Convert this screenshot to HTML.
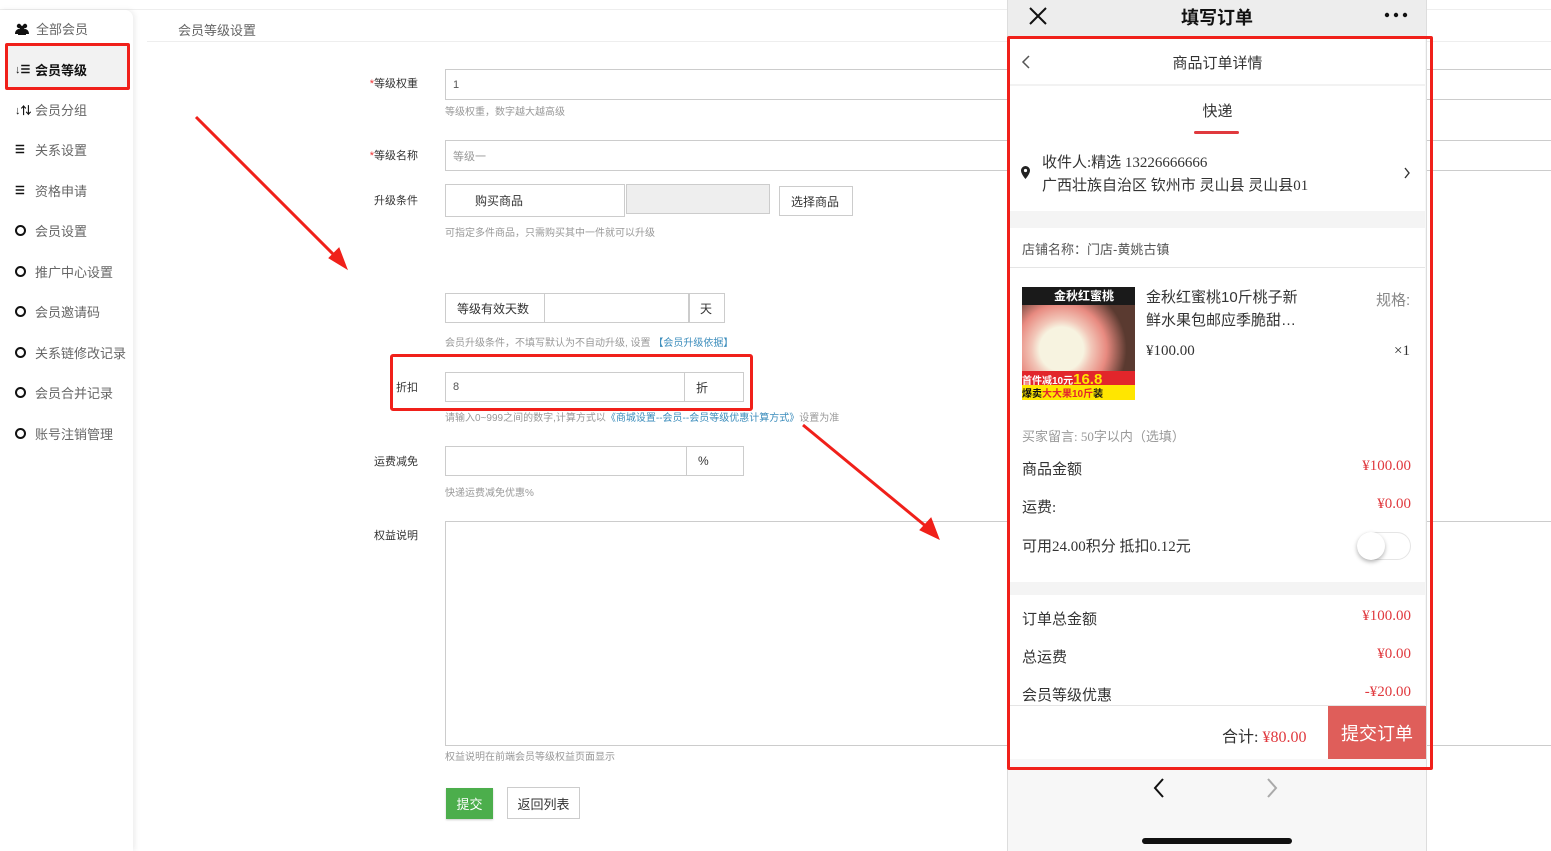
<!DOCTYPE html>
<html><head><meta charset="utf-8"><style>
*{box-sizing:border-box;margin:0;padding:0}
body{width:1551px;height:851px;overflow:hidden;background:#fff;font-family:"Liberation Sans","Noto Sans CJK SC",sans-serif;position:relative;color:#333}
.a{position:absolute}
.side{left:0;top:10px;width:133px;height:841px;background:#fff;box-shadow:2px 0 6px rgba(0,0,0,.08);border-top-right-radius:8px}
.mi{position:absolute;left:15px;font-size:13px;color:#666;display:flex;align-items:center}
.mi i{display:inline-block;width:11px;height:11px;border:2px solid #111;border-radius:50%;margin-right:9px}
.mi b{display:inline-block;width:12px;margin-right:8px;font-weight:bold;color:#111;font-size:11px}
.lbl{position:absolute;font-size:11px;color:#333;text-align:right;width:60px}
.inp{position:absolute;border:1px solid #ccc;background:#fff;font-size:11px;color:#555;padding-left:7px;display:flex;align-items:center}
.hint{position:absolute;font-size:10px;color:#999}
.ph{left:1007px;top:0;width:420px;height:851px;background:#f7f7f7;border-left:1px solid #ddd;border-right:1px solid #ddd}
.r{position:absolute;display:flex;justify-content:space-between;font-size:15px;color:#333;font-family:"Liberation Serif","Noto Sans CJK SC",serif}
.r .p{color:#e0393e}
</style></head><body>
<div class="a" style="left:0;top:9px;width:1551px;height:1px;background:#eee"></div>
<div class="a side"></div>
<div class="mi" style="top:19px"><svg width="14" height="12" style="margin-right:7px"><circle cx="4" cy="3" r="2.2" fill="#111"/><circle cx="10" cy="3" r="2.2" fill="#111"/><circle cx="7" cy="5" r="2.4" fill="#111"/><path d="M0 11c0-4 3-5 4-5s4 1 4 5zM6 11c0-4 3-5 4-5s4 1 4 5z" fill="#111"/><path d="M3 12c0-4 2-5 4-5s4 1 4 5z" fill="#111"/></svg>全部会员</div>
<div class="a" style="left:7px;top:45px;width:121px;height:44px;background:#f2f2f2"></div>
<div class="mi" style="top:60px;color:#111;font-weight:bold"><b>↓☰</b>会员等级</div>
<div class="mi" style="top:100px"><b>↓⇅</b>会员分组</div>
<div class="mi" style="top:140px"><b>☰</b>关系设置</div>
<div class="mi" style="top:181px"><b>☰</b>资格申请</div>
<div class="mi" style="top:221px"><i></i>会员设置</div>
<div class="mi" style="top:262px"><i></i>推广中心设置</div>
<div class="mi" style="top:302px"><i></i>会员邀请码</div>
<div class="mi" style="top:343px"><i></i>关系链修改记录</div>
<div class="mi" style="top:383px"><i></i>会员合并记录</div>
<div class="mi" style="top:424px"><i></i>账号注销管理</div>
<div class="a" style="left:5px;top:43px;width:125px;height:47px;border:3px solid #f0201a;border-radius:2px"></div>

<div class="a" style="left:178px;top:20px;font-size:13px;color:#666">会员等级设置</div>
<div class="a" style="left:147px;top:41px;width:1404px;height:1px;background:#eee"></div>

<div class="lbl" style="left:358px;top:75px"><span style="color:#e33">*</span>等级权重</div>
<div class="inp" style="left:445px;top:69px;width:1120px;height:31px">1</div>
<div class="hint" style="left:445px;top:103px">等级权重，数字越大越高级</div>
<div class="lbl" style="left:358px;top:147px"><span style="color:#e33">*</span>等级名称</div>
<div class="inp" style="left:445px;top:140px;width:1120px;height:31px;color:#999">等级一</div>
<div class="lbl" style="left:358px;top:192px">升级条件</div>
<div class="inp" style="left:445px;top:184px;width:180px;height:33px;font-size:12px;color:#333;padding-left:29px">购买商品</div>
<div class="a" style="left:626px;top:184px;width:144px;height:30px;background:#eee;border:1px solid #ccc"></div>
<div class="inp" style="left:779px;top:186px;width:74px;height:30px;font-size:12px;color:#333;padding-left:11px">选择商品</div>
<div class="hint" style="left:445px;top:224px">可指定多件商品，只需购买其中一件就可以升级</div>
<div class="inp" style="left:445px;top:293px;width:100px;height:30px;font-size:12px;color:#333;padding-left:11px">等级有效天数</div>
<div class="inp" style="left:544px;top:293px;width:145px;height:30px"></div>
<div class="inp" style="left:689px;top:293px;width:36px;height:30px;font-size:12px;color:#333;padding-left:10px">天</div>
<div class="hint" style="left:445px;top:334px">会员升级条件，不填写默认为不自动升级, 设置 <span style="color:#3c8dbc">【会员升级依据】</span></div>
<div class="lbl" style="left:358px;top:379px">折扣</div>
<div class="inp" style="left:445px;top:372px;width:240px;height:30px">8</div>
<div class="inp" style="left:684px;top:372px;width:60px;height:30px;font-size:12px;color:#333;padding-left:11px">折</div>
<div class="a" style="left:390px;top:354px;width:363px;height:57px;border:3px solid #f0201a;border-radius:3px"></div>
<div class="hint" style="left:445px;top:409px">请输入0~999之间的数字,计算方式以<span style="color:#3c8dbc">《商城设置--会员--会员等级优惠计算方式》</span>设置为准</div>
<div class="lbl" style="left:358px;top:453px">运费减免</div>
<div class="inp" style="left:445px;top:446px;width:242px;height:30px"></div>
<div class="inp" style="left:686px;top:446px;width:58px;height:30px;font-size:12px;color:#333;padding-left:11px">%</div>
<div class="hint" style="left:445px;top:484px">快递运费减免优惠%</div>
<div class="lbl" style="left:358px;top:527px">权益说明</div>
<div class="inp" style="left:445px;top:521px;width:1120px;height:225px"></div>
<div class="hint" style="left:445px;top:748px">权益说明在前端会员等级权益页面显示</div>
<div class="a" style="left:446px;top:788px;width:47px;height:31px;background:#4cae4c;color:#fff;font-size:13px;display:flex;align-items:center;justify-content:center;box-shadow:0 1px 2px rgba(0,0,0,.2)">提交</div>
<div class="a" style="left:507px;top:787px;width:73px;height:32px;border:1px solid #ccc;font-size:13px;display:flex;align-items:center;justify-content:center">返回列表</div>

<svg class="a" style="left:0;top:0" width="1551" height="851">
<g stroke="#f0201a" stroke-width="3" fill="#f0201a">
<line x1="196" y1="117" x2="337" y2="258"/><polygon points="347,269 329,258 339,248" stroke-width="1"/>
<line x1="803" y1="425" x2="928" y2="528"/><polygon points="939,539 920,530 931,518" stroke-width="1"/>
</g></svg>

<div class="a ph"></div>
<div class="a" style="left:1008px;top:0;width:418px;height:37px;background:#ededed"></div>
<svg class="a" style="left:1028px;top:6px" width="20" height="20"><path d="M2 2L18 18M18 2L2 18" stroke="#111" stroke-width="2"/></svg>
<div class="a" style="left:1008px;top:4px;width:418px;text-align:center;font-size:18px;font-weight:bold;color:#111">填写订单</div>
<svg class="a" style="left:1384px;top:12px" width="24" height="6"><circle cx="3" cy="3" r="2.2" fill="#111"/><circle cx="12" cy="3" r="2.2" fill="#111"/><circle cx="21" cy="3" r="2.2" fill="#111"/></svg>
<div class="a" style="left:1010px;top:38px;width:415px;height:720px;background:#fff"></div>
<svg class="a" style="left:1020px;top:54px" width="12" height="16"><path d="M9 2L3 8L9 14" stroke="#555" stroke-width="1.5" fill="none"/></svg>
<div class="a" style="left:1010px;top:52px;width:415px;text-align:center;font-size:15px;color:#333">商品订单详情</div>
<div class="a" style="left:1010px;top:84px;width:415px;height:2px;background:#f2f2f2"></div>
<div class="a" style="left:1010px;top:100px;width:415px;text-align:center;font-size:15px;color:#333">快递</div>
<div class="a" style="left:1194px;top:131px;width:45px;height:3px;background:#e0393e;border-radius:2px"></div>
<svg class="a" style="left:1020px;top:165px" width="11" height="15"><path d="M5.5 1a4.5 4.5 0 0 1 4.5 4.5C10 9 5.5 14 5.5 14S1 9 1 5.5A4.5 4.5 0 0 1 5.5 1z" fill="#222"/><circle cx="5.5" cy="5.5" r="1.6" fill="#fff"/></svg>
<div class="a" style="left:1042px;top:152px;font-size:15px;color:#333;font-family:'Liberation Serif','Noto Sans CJK SC',serif;line-height:23px">收件人:精选 13226666666<br>广西壮族自治区 钦州市 灵山县 灵山县01</div>
<svg class="a" style="left:1403px;top:167px" width="8" height="12"><path d="M2 1L6 6L2 11" stroke="#333" stroke-width="1.4" fill="none"/></svg>
<div class="a" style="left:1010px;top:211px;width:415px;height:17px;background:#f4f4f4"></div>
<div class="a" style="left:1022px;top:239px;font-size:13px;color:#555">店铺名称：门店-黄姚古镇</div>
<div class="a" style="left:1010px;top:267px;width:415px;height:1px;background:#e5e5e5"></div>
<div class="a" style="left:1022px;top:287px;width:113px;height:113px;background:radial-gradient(circle at 35% 55%,#f7f3e0 0 22px,#f2c6b8 30px,#e88a80 45px,#5a3a30 65px);overflow:hidden">
<div class="a" style="left:0;top:0;width:113px;height:18px;background:#1a1a1a;color:#fff;font-size:12px;font-weight:bold;padding-left:32px">金秋红蜜桃</div>
<div class="a" style="left:0;top:84px;width:113px;height:14px;background:#e2262b;color:#fff;font-size:10px;font-weight:bold">首件减10元<span style="color:#ffe600;font-size:15px">16.8</span></div>
<div class="a" style="left:0;top:98px;width:113px;height:15px;background:#ffe600;color:#111;font-size:10px;font-weight:bold">爆卖<span style="color:#e2262b">大大果10斤</span>装</div>
</div>
<div class="a" style="left:1146px;top:286px;font-size:15px;color:#333;line-height:23px;width:170px">金秋红蜜桃10斤桃子新<br>鲜水果包邮应季脆甜…</div>
<div class="a" style="left:1376px;top:289px;font-size:15px;color:#888">规格:</div>
<div class="a" style="left:1146px;top:343px;font-size:15px;color:#333;font-family:'Liberation Serif',serif">¥100.00</div>
<div class="a" style="left:1394px;top:343px;font-size:15px;color:#333;font-family:'Liberation Serif',serif">×1</div>
<div class="a" style="left:1022px;top:426px;font-size:13px;color:#999;font-family:'Liberation Serif','Noto Sans CJK SC',serif">买家留言: 50字以内（选填）</div>
<div class="r" style="left:1022px;width:389px;top:458px"><span>商品金额</span><span class="p">¥100.00</span></div>
<div class="r" style="left:1022px;width:389px;top:496px"><span>运费:</span><span class="p">¥0.00</span></div>
<div class="r" style="left:1022px;width:389px;top:535px"><span>可用24.00积分 抵扣0.12元</span></div>
<div class="a" style="left:1357px;top:532px;width:54px;height:28px;border:1px solid #e5e5e5;border-radius:14px;background:#fff"></div>
<div class="a" style="left:1357px;top:532px;width:28px;height:28px;border-radius:50%;background:#fff;box-shadow:0 2px 4px rgba(0,0,0,.3)"></div>
<div class="a" style="left:1010px;top:582px;width:415px;height:13px;background:#f4f4f4"></div>
<div class="r" style="left:1022px;width:389px;top:608px"><span>订单总金额</span><span class="p">¥100.00</span></div>
<div class="r" style="left:1022px;width:389px;top:646px"><span>总运费</span><span class="p">¥0.00</span></div>
<div class="r" style="left:1022px;width:389px;top:684px"><span>会员等级优惠</span><span class="p">-¥20.00</span></div>
<div class="a" style="left:1010px;top:705px;width:415px;height:54px;background:#fff;border-top:1px solid #e5e5e5"></div>
<div class="a" style="left:1222px;top:723px;font-size:16px;color:#333;font-family:'Liberation Serif','Noto Sans CJK SC',serif">合计: <span style="color:#e0393e">¥80.00</span></div>
<div class="a" style="left:1328px;top:706px;width:98px;height:53px;background:#df5e5a;color:#fff;font-size:18px;display:flex;align-items:center;justify-content:center">提交订单</div>
<div class="a" style="left:1007px;top:36px;width:426px;height:734px;border:3px solid #f0201a;border-radius:2px"></div>
<svg class="a" style="left:1152px;top:777px" width="14" height="22"><path d="M11 2L3 11L11 20" stroke="#111" stroke-width="2" fill="none"/></svg>
<svg class="a" style="left:1265px;top:777px" width="14" height="22"><path d="M3 2L11 11L3 20" stroke="#aaa" stroke-width="2" fill="none"/></svg>
<div class="a" style="left:1142px;top:838px;width:150px;height:6px;background:#111;border-radius:3px"></div>
</body></html>
